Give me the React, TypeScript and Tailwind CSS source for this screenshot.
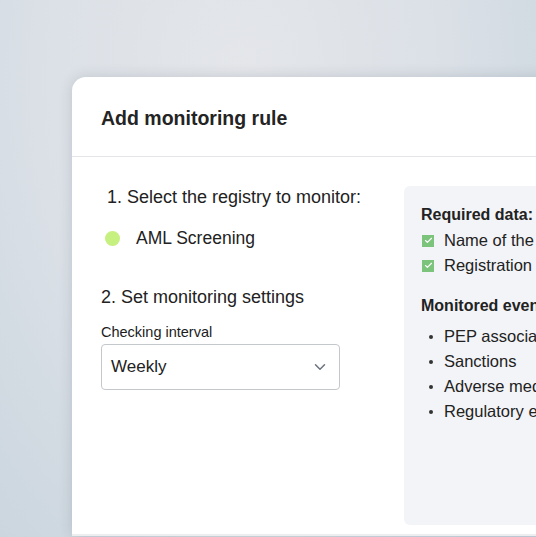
import { ChevronDown, Check } from "lucide-react";

const requiredData = ["Name of the company", "Registration number"];
const monitoredEvents = ["PEP associations", "Sanctions", "Adverse media", "Regulatory enforcement"];

export default function App() {
  return (
    <div
      className="w-[536px] h-[537px] overflow-hidden pl-[72px] pt-[77px] bg-[radial-gradient(ellipse_at_45%_15%,#e4e6ea_0%,#dce1e7_45%,#c8d4dd_100%)]"
      style={{ fontFamily: '"Liberation Sans", Arial, sans-serif' }}
    >
      <div className="w-[540px] h-[459px] bg-white rounded-tl-[14px] border-b-2 border-[#eceef0] shadow-[0_0_14px_rgba(40,50,70,0.16)] text-[#222]">
        {/* header */}
        <div className="h-[80px] flex items-center pl-[29px] border-b border-[#e3e5e8]">
          <h1 className="text-[19.5px] font-bold leading-7 pt-[2px] text-[#242424]">Add monitoring rule</h1>
        </div>

        <div className="flex pl-[29px] h-[377px]">
          {/* settings column */}
          <div className="w-[239px] shrink-0 flex flex-col pt-[28px]">
            <p className="pl-[6px] text-[18px] leading-6 whitespace-nowrap">1. Select the registry to monitor:</p>
            <div className="flex items-center mt-[17px] pl-[4px]">
              <span className="w-[15px] h-[15px] rounded-full bg-[#c6f07f]" />
              <span className="ml-[16px] text-[17.5px] leading-6">AML Screening</span>
            </div>
            <p className="mt-[35px] text-[18px] leading-6">2. Set monitoring settings</p>
            <label className="mt-[13px] text-[14.5px] leading-5 text-[#1c1c1c]">Checking interval</label>
            <div className="mt-[2px] h-[46px] border border-[#c4c7cc] rounded-[4px] flex items-center justify-between pl-[9px] pr-[10px]">
              <span className="text-[17px]">Weekly</span>
              <ChevronDown className="w-[18px] h-[18px] text-[#6b7280]" strokeWidth={2} />
            </div>
          </div>

          {/* registry details */}
          <div className="ml-[64px] mt-[29px] h-[339px] flex-1 min-w-0 bg-[#f3f4f7] rounded-[6px] pl-[17px] pt-[17px] whitespace-nowrap overflow-hidden">
            <p className="text-[16px] font-bold leading-6">Required data:</p>
            <ul className="mt-[1px]">
              {requiredData.map((item) => (
                <li key={item} className="flex items-center h-[25px]">
                  <span className="shrink-0 ml-[1px] w-[12px] h-[12px] bg-[#7cc47c] flex items-center justify-center">
                    <Check className="w-[9px] h-[9px] text-white" strokeWidth={3} />
                  </span>
                  <span className="ml-[10px] text-[16.5px]">{item}</span>
                </li>
              ))}
            </ul>
            <p className="mt-[16px] text-[16px] font-bold leading-6">Monitored events:</p>
            <ul className="mt-[6px]">
              {monitoredEvents.map((item) => (
                <li key={item} className="flex items-center h-[25px]">
                  <span className="shrink-0 ml-[8px] w-[4px] h-[4px] rounded-full bg-[#333]" />
                  <span className="ml-[11px] text-[16.5px]">{item}</span>
                </li>
              ))}
            </ul>
          </div>
        </div>
      </div>
    </div>
  );
}
